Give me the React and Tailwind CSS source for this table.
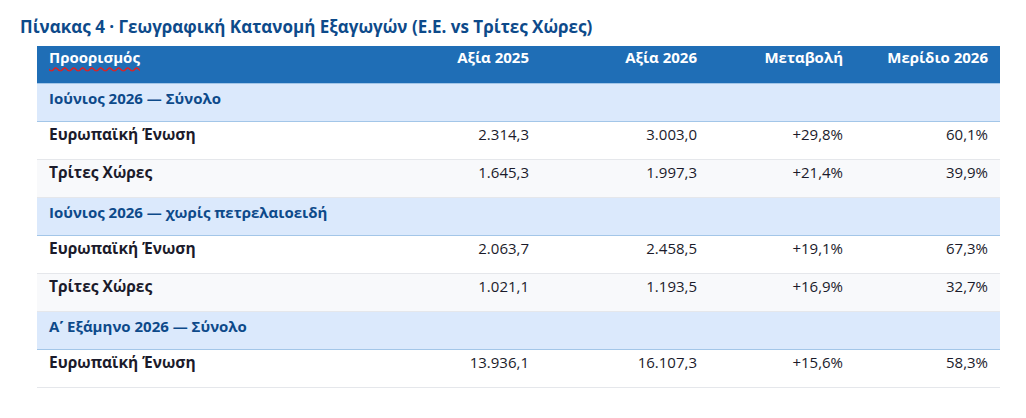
import React from "react";

const sections = [
    {
        title: "Ιούνιος 2026 — Σύνολο",
        rows: [
            ["Ευρωπαϊκή Ένωση", "2.314,3", "3.003,0", "+29,8%", "60,1%"],
            ["Τρίτες Χώρες", "1.645,3", "1.997,3", "+21,4%", "39,9%"],
        ],
    },
    {
        title: "Ιούνιος 2026 — χωρίς πετρελαιοειδή",
        rows: [
            ["Ευρωπαϊκή Ένωση", "2.063,7", "2.458,5", "+19,1%", "67,3%"],
            ["Τρίτες Χώρες", "1.021,1", "1.193,5", "+16,9%", "32,7%"],
        ],
    },
    {
        title: "Α\u0374 Εξάμηνο 2026 — Σύνολο",
        rows: [["Ευρωπαϊκή Ένωση", "13.936,1", "16.107,3", "+15,6%", "58,3%"]],
    },
];

export default function App() {
    return (
        <div
            className="w-[1026px] h-[418px] bg-white overflow-hidden"
            style={{ fontFamily: '"Open Sans", "Noto Sans", sans-serif' }}
        >
            <h2 className="pl-[20px] pt-[15px] h-[46px] text-[17px] font-bold text-[#0d4a8a] leading-[24px]">
                Πίνακας 4 · Γεωγραφική Κατανομή Εξαγωγών (Ε.Ε. vs Τρίτες Χώρες)
            </h2>
            <table className="ml-[37px] w-[963px] border-collapse text-[15px]">
                <colgroup>
                    <col className="w-[336px]" />
                    <col className="w-[168px]" />
                    <col className="w-[168px]" />
                    <col className="w-[146px]" />
                    <col className="w-[145px]" />
                </colgroup>
                <thead>
                    <tr className="bg-[#1f6eb6] text-white h-[37px] leading-[20px]">
                        <th className="text-left align-top pt-[1px] px-[12px] font-bold">
                            <span className="underline decoration-wavy decoration-[#e02020] underline-offset-[3px]">
                                Προορισμός
                            </span>
                        </th>
                        <th className="text-right align-top pt-[1px] px-[12px] font-bold">Αξία 2025</th>
                        <th className="text-right align-top pt-[1px] px-[12px] font-bold">Αξία 2026</th>
                        <th className="text-right align-top pt-[1px] px-[12px] font-bold">Μεταβολή</th>
                        <th className="text-right align-top pt-[1px] px-[12px] font-bold">Μερίδιο 2026</th>
                    </tr>
                </thead>
                <tbody>
                    {sections.map((s, si) => (
                        <React.Fragment key={si}>
                            <tr className="bg-[#dbe9fc] h-[38px] border-y border-[#a3c6e8] leading-[20px]">
                                <td
                                    colSpan={5}
                                    className="align-top pt-[4px] px-[12px] font-bold text-[#0d4a8a]"
                                >
                                    {s.title}
                                </td>
                            </tr>
                            {s.rows.map((r, ri) => (
                                <tr
                                    key={ri}
                                    className={
                                        ri % 2 === 1
                                            ? "bg-[#f8f9fb] h-[38px] border-b border-[#e5e7eb] text-[#1b1b2b] leading-[22px]"
                                            : "bg-white h-[38px] border-b border-[#e5e7eb] text-[#1b1b2b] leading-[22px]"
                                    }
                                >
                                    <td className="align-top pt-[1px] px-[12px] font-bold text-[15.5px]">{r[0]}</td>
                                    <td className="align-top pt-[1px] px-[12px] text-right">{r[1]}</td>
                                    <td className="align-top pt-[1px] px-[12px] text-right">{r[2]}</td>
                                    <td className="align-top pt-[1px] px-[12px] text-right">{r[3]}</td>
                                    <td className="align-top pt-[1px] px-[12px] text-right">{r[4]}</td>
                                </tr>
                            ))}
                        </React.Fragment>
                    ))}
                </tbody>
            </table>
        </div>
    );
}
